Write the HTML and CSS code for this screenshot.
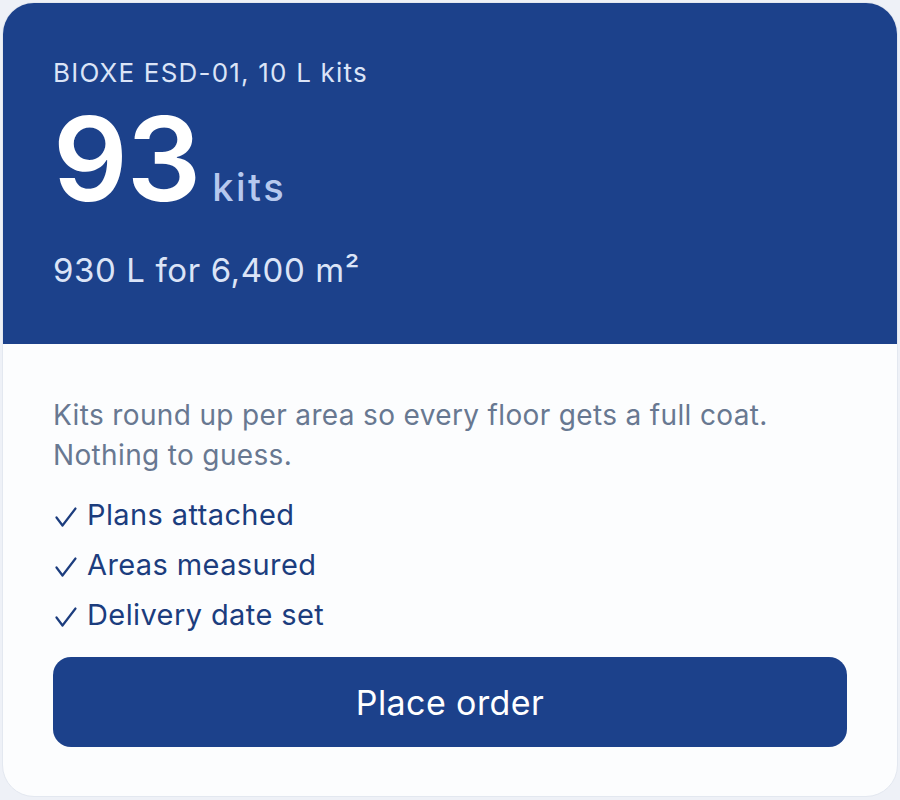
FILE: index.html
```html
<!DOCTYPE html>
<html lang="en">
<head>
    <meta charset="UTF-8">
    <meta name="viewport" content="width=device-width, initial-scale=1.0">
    <title>Order summary</title>
    <link rel="stylesheet" href="styles.css">
</head>
<body>
    <div class="card">
        <div class="hero">
            <div class="label">BIOXE ESD-01, 10 L kits</div>
            <div class="total">
                <span class="count">93</span>
                <span class="unit">kits</span>
            </div>
            <div class="sub">930 L for 6,400 m²</div>
        </div>
        <div class="details">
            <p class="note">Kits round up per area so every floor gets a full coat. Nothing to guess.</p>
            <ul class="checks">
                <li><svg class="tick" viewBox="0 0 22 20"><polyline points="1.5,10.5 7.5,18.5 20.5,1.5"/></svg>Plans attached</li>
                <li><svg class="tick" viewBox="0 0 22 20"><polyline points="1.5,10.5 7.5,18.5 20.5,1.5"/></svg>Areas measured</li>
                <li><svg class="tick" viewBox="0 0 22 20"><polyline points="1.5,10.5 7.5,18.5 20.5,1.5"/></svg>Delivery date set</li>
            </ul>
            <button type="button" class="order">Place order</button>
        </div>
    </div>
</body>
</html>
```

FILE: styles.css
```css
body { margin: 0; padding: 2px; background: #eef1f7; font-family: Inter, "Open Sans", sans-serif; }
.card { height: 795px; box-sizing: border-box; background: #fcfdfe; border: 1px solid #e3e8f0; border-radius: 32px; overflow: hidden; }
.hero { height: 341px; box-sizing: border-box; background: #1c418b; padding: 54px 50px 0; }
.label { font-size: 26px; line-height: 32px; letter-spacing: 1.2px; color: #dbe4f7; }
.total { display: flex; align-items: baseline; gap: 12px; margin-top: 11px; }
.count { font-size: 117px; line-height: 1; font-weight: 600; color: #fff; letter-spacing: -1px; }
.unit { font-size: 38px; font-weight: 500; color: #b6c8ee; letter-spacing: 2.5px; }
.sub { font-size: 33px; line-height: 40px; letter-spacing: 0.6px; color: #dbe4f7; margin-top: 33px; }
.details { padding: 51px 50px 0; }
.note { margin: 0; font-size: 28px; line-height: 40px; letter-spacing: 0.35px; color: #687891; }
.checks { list-style: none; margin: 15px 0 0; padding: 0; }
.checks li { display: flex; align-items: center; font-size: 29px; line-height: 50px; letter-spacing: 0.4px; color: #1c3d7e; }
.tick { width: 22px; height: 20px; margin: 4px 10px 0 2px; fill: none; stroke: #1c3d7e; stroke-width: 2.2; stroke-linecap: round; stroke-linejoin: round; }
.order { display: block; width: 100%; height: 90px; margin-top: 17px; border: none; border-radius: 18px; background: #1c418b; color: #fff; font-family: inherit; font-size: 34px; letter-spacing: 0.4px; }
```
